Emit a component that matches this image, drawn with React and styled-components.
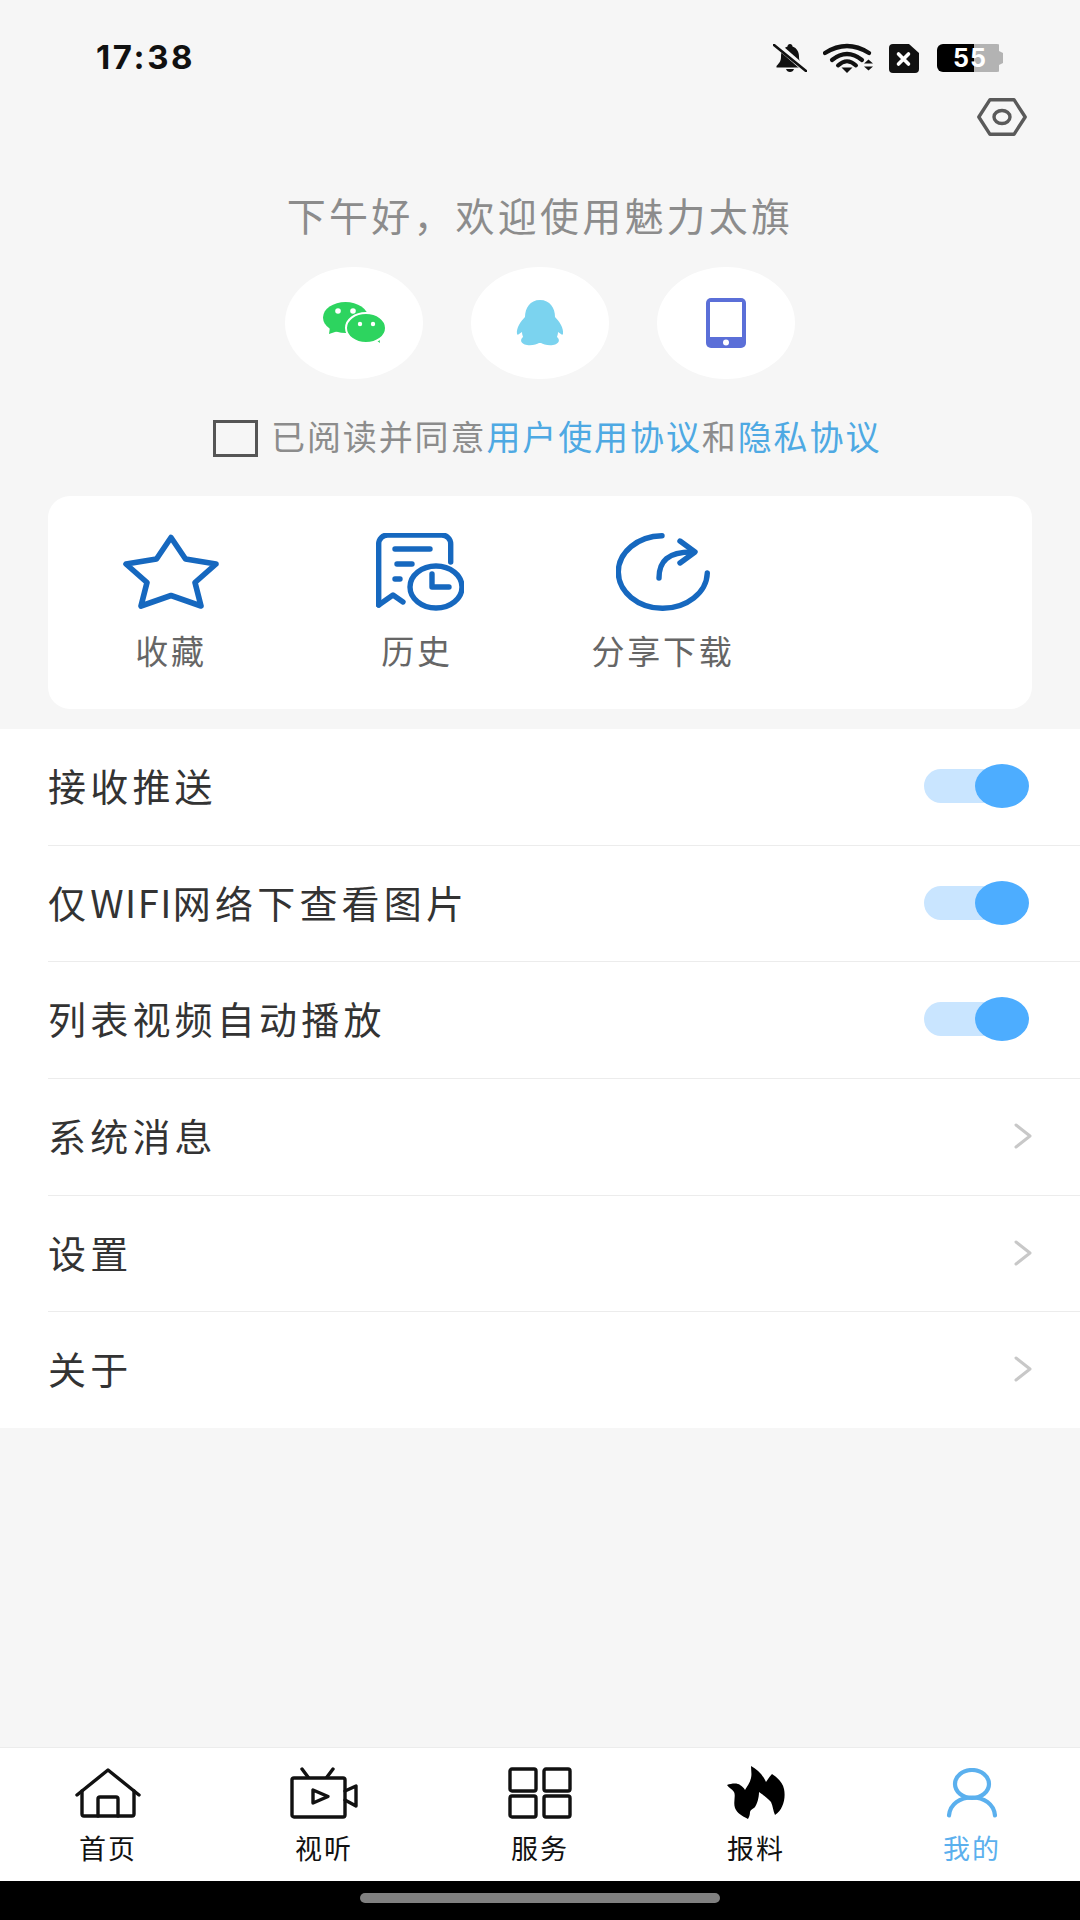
import React from 'react';
import styled, { createGlobalStyle } from 'styled-components';

const GlobalStyle = createGlobalStyle`
  html, body {
    margin: 0;
    padding: 0;
    background: #f6f6f6;
    font-family: "Noto Sans CJK SC", "Noto Sans", sans-serif;
  }
  * { box-sizing: border-box; }
`;

const Page = styled.div`
  width: 1080px;
  height: 1920px;
  display: flex;
  flex-direction: column;
  background: #f6f6f6;
  overflow: hidden;
`;

const StatusBar = styled.div`
  height: 90px;
  padding: 26px 77px 0 96px;
  display: flex;
  align-items: flex-start;
  justify-content: space-between;
`;

const StatusInner = styled.div`
  height: 64px;
  display: flex;
  align-items: center;
  gap: 16px;
`;

const Time = styled.span`
  margin-top: -3px;
  font-family: Inter, "Liberation Sans", sans-serif;
  font-weight: 700;
  font-size: 33px;
  letter-spacing: 2.6px;
  color: #111;
`;

const Battery = styled.div`
  width: 66px;
  height: 28px;
  margin-left: 2px;
  border-radius: 6px;
  display: flex;
  align-items: center;
  justify-content: center;
  background: linear-gradient(90deg, #000 0, #000 37px, #b3b3b3 37px, #b3b3b3 100%);
  clip-path: polygon(0 0, 62px 0, 62px 7px, 66px 9px, 66px 19px, 62px 21px, 62px 100%, 0 100%);
`;

const BatteryText = styled.span`
  font-family: Inter, "Liberation Sans", sans-serif;
  font-weight: 700;
  font-size: 25px;
  line-height: 28px;
  letter-spacing: 1px;
  color: #fff;
`;

const GearRow = styled.div`
  height: 60px;
  padding: 8px 53px 0 0;
  display: flex;
  justify-content: flex-end;
  align-items: flex-start;
`;

const Greeting = styled.div`
  margin-top: 42px;
  font-size: 39px;
  line-height: 44px;
  letter-spacing: 3.2px;
  text-align: center;
  color: #8c8c8c;
`;

const LoginRow = styled.div`
  margin-top: 31px;
  display: flex;
  justify-content: center;
  gap: 48px;
`;

const LoginButton = styled.div`
  width: 138px;
  height: 112px;
  border-radius: 50%;
  background: #fff;
  display: flex;
  align-items: center;
  justify-content: center;
`;

const AgreementRow = styled.div`
  margin-top: 39px;
  height: 40px;
  padding-left: 213px;
  display: flex;
  align-items: center;
  gap: 13px;
`;

const Checkbox = styled.div`
  width: 45px;
  height: 37px;
  border: 3px solid #555;
`;

const AgreementText = styled.span`
  padding-bottom: 4px;
  font-size: 34px;
  line-height: 40px;
  letter-spacing: 1.9px;
  color: #8c8c8c;
  white-space: nowrap;
`;

const AgreementLink = styled.span`
  color: #4ea9e3;
`;

const Card = styled.div`
  margin: 38px 48px 20px;
  height: 213px;
  padding-top: 37px;
  border-radius: 22px;
  background: #fff;
  display: grid;
  grid-template-columns: repeat(4, 1fr);
  align-items: start;
`;

const Shortcut = styled.div`
  display: flex;
  flex-direction: column;
  align-items: center;
`;

const ShortcutIcon = styled.div`
  height: 78px;
  margin-left: ${p => p.$shift || 0}px;
  display: flex;
  align-items: center;
  justify-content: center;
`;

const ShortcutLabel = styled.div`
  margin-top: 19px;
  font-size: 33px;
  line-height: 40px;
  letter-spacing: 2.7px;
  color: #666;
  white-space: nowrap;
`;

const List = styled.div`
  height: 699px;
  background: #fff;
  display: flex;
  flex-direction: column;
`;

const Row = styled.div`
  flex: 1;
  margin-left: 48px;
  padding-right: 51px;
  display: flex;
  align-items: center;
  justify-content: space-between;
  border-bottom: ${p => (p.$last ? 'none' : '1px solid #ececec')};
`;

const RowLabel = styled.span`
  padding-bottom: 4px;
  font-size: 38px;
  line-height: 44px;
  letter-spacing: 4.2px;
  color: #333;
  white-space: nowrap;
`;

const Latin = styled.span`
  letter-spacing: 1.5px;
`;

const Toggle = styled.div`
  width: 105px;
  height: 44px;
  margin-bottom: 2px;
  display: flex;
  align-items: center;
`;

const ToggleTrack = styled.div`
  width: 86px;
  height: 34px;
  flex-shrink: 0;
  border-radius: 17px;
  background: #c9e5ff;
`;

const ToggleThumb = styled.div`
  width: 54px;
  height: 44px;
  flex-shrink: 0;
  margin-left: -35px;
  border-radius: 50%;
  background: #4dadff;
`;

const Chevron = styled.svg`
  width: 18px;
  height: 26px;
  margin: 0 -3px 2px 0;
`;

const Spacer = styled.div`
  flex: 1;
`;

const TabBar = styled.div`
  height: 134px;
  padding-top: 18px;
  background: #fff;
  border-top: 1px solid #ececec;
  display: flex;
`;

const Tab = styled.div`
  flex: 1;
  display: flex;
  flex-direction: column;
  align-items: center;
`;

const TabIcon = styled.div`
  height: 54px;
  display: flex;
  align-items: center;
  justify-content: center;
`;

const TabLabel = styled.div`
  margin-top: 13px;
  font-size: 27px;
  line-height: 30px;
  letter-spacing: 2px;
  color: ${p => (p.$active ? '#5bb0ee' : '#111')};
`;

const NavBar = styled.div`
  height: 39px;
  background: #000;
  display: flex;
  justify-content: center;
  padding-top: 12px;
`;

const HomePill = styled.div`
  width: 360px;
  height: 10px;
  border-radius: 5px;
  background: #808080;
`;

const BellIcon = () => (
  <svg width="34" height="28" viewBox="0 0 34 28">
    <path fill="#111" d="M17 0c1.500 0 2.500 1 2.500 2.500C24 4 26 8 26 12.500c0 4 1 6 4.500 9.500v1.500h-27V22C7 18.500 8 16.500 8 12.500 8 8 10 4 14.500 2.500 14.500 1 15.500 0 17 0z" />
    <path fill="#111" d="M13 25h8c-.6 2-2 3-4 3s-3.400-1-4-3z" />
    <path d="M3 0l31 27" stroke="#f6f6f6" strokeWidth="6" />
    <path d="M1 1l32 26" stroke="#111" strokeWidth="2.600" strokeLinecap="round" />
  </svg>
);

const WifiIcon = () => (
  <svg width="50" height="30" viewBox="0 0 50 30" fill="none">
    <path d="M2 10Q24-4 46 10" stroke="#111" strokeWidth="4.200" strokeLinecap="round" />
    <path d="M9 17Q24 5 39 17" stroke="#111" strokeWidth="4.200" strokeLinecap="round" />
    <path d="M15 22.500Q24 14 33 22.500" stroke="#111" strokeWidth="4" strokeLinecap="round" />
    <path d="M18.500 24.500h11L24 30z" fill="#111" />
    <path d="M41 20.500l4.500-4 4.500 4zM41 23.500h9l-4.500 4z" fill="#111" />
  </svg>
);

const SimIcon = () => (
  <svg width="30" height="29" viewBox="0 0 30 29">
    <path fill="#111" d="M4 0h16l10 9v16a4 4 0 0 1-4 4H4a4 4 0 0 1-4-4V4a4 4 0 0 1 4-4z" />
    <path d="M9.500 10l10 10M19.500 10l-10 10" stroke="#fff" strokeWidth="3.600" strokeLinecap="round" />
  </svg>
);

const GearIcon = () => (
  <svg width="50" height="38" viewBox="0 0 50 38" fill="none" stroke="#5a5a5a" strokeWidth="3.400">
    <path d="M1.800 19L13 1.700h24L48.200 19 37 36.300H13z" strokeLinejoin="round" />
    <ellipse cx="25" cy="19" rx="8" ry="6.500" />
  </svg>
);

const WechatIcon = () => (
  <svg width="62" height="42" viewBox="0 0 62 42">
    <path fill="#2dd45f" d="M7 25l-1 7 9-3z" />
    <ellipse cx="22.500" cy="15.500" rx="22.500" ry="15.500" fill="#2dd45f" />
    <circle cx="15" cy="9" r="2.800" fill="#fff" />
    <circle cx="30" cy="9" r="2.800" fill="#fff" />
    <path fill="#2dd45f" d="M50 36l7 5-1-9z" />
    <ellipse cx="43" cy="26" rx="20" ry="15" fill="#2dd45f" stroke="#fff" strokeWidth="2" />
    <circle cx="37" cy="22" r="2.200" fill="#fff" />
    <circle cx="50" cy="22" r="2.200" fill="#fff" />
  </svg>
);

const QQIcon = () => (
  <svg width="48" height="46" viewBox="0 0 48 46">
    <path fill="#7bd3ef" d="M24 0C34 0 39 8 39 17C43 21 48 28 47 34C46 36 44 33 42 32C42 35 41 36 41 37C44 39 44 44 37 45C32 46 27 44 25 43H23C21 44 16 46 11 45C4 44 4 39 7 37C7 36 6 35 6 32C4 33 2 36 1 34C0 28 5 21 9 17C9 8 14 0 24 0Z" />
  </svg>
);

const PhoneIcon = () => (
  <svg width="40" height="50" viewBox="0 0 40 50">
    <rect width="40" height="50" rx="5" fill="#5b6fd8" />
    <rect x="4" y="4" width="32" height="35" fill="#fff" />
    <circle cx="20" cy="44.500" r="3" fill="#fff" />
  </svg>
);

const StarIcon = () => (
  <svg width="96" height="76" viewBox="0 0 96 76" fill="none" stroke="#1668bf" strokeWidth="5.600" strokeLinejoin="round">
    <path d="M48 3.500L62.500 25 93 30 72 48.500 78 72 48 61.500 18 72 24 48.500 3 30 33.500 25z" />
  </svg>
);

const HistoryIcon = () => (
  <svg width="88" height="78" viewBox="0 0 88 78" fill="none" stroke="#1668bf" strokeWidth="5.400" strokeLinecap="round" strokeLinejoin="round">
    <path d="M2.700 72V11a9 9 0 0 1 9-9h54a9 9 0 0 1 9 9v18" />
    <path d="M2.700 72L17 62l10 7" />
    <path d="M19 16h35M21 31h15M19 46h5" />
    <ellipse cx="60" cy="54" rx="26" ry="21" />
    <path d="M56 41v13h17" />
  </svg>
);

const ShareIcon = () => (
  <svg width="94" height="78" viewBox="0 0 94 78" fill="none" stroke="#1668bf" strokeWidth="5.400" strokeLinecap="round" strokeLinejoin="round">
    <path d="M46 2.700A44.500 36.300 0 1 0 91.300 40" />
    <path d="M43 45C43 28 52 19 76 19" />
    <path d="M64 8l15 11-15 11" />
  </svg>
);

const HomeIcon = () => (
  <svg width="66" height="50" viewBox="0 0 66 50" fill="none" stroke="#111" strokeWidth="3.400" strokeLinecap="round" strokeLinejoin="round">
    <path d="M2 27L33 2l31 25" />
    <path d="M7 23v23a2 2 0 0 0 2 2h48a2 2 0 0 0 2-2V23" />
    <path d="M23 48V31a2 2 0 0 1 2-2h16a2 2 0 0 1 2 2v17" />
  </svg>
);

const VideoIcon = () => (
  <svg width="68" height="52" viewBox="0 0 68 52" fill="none" stroke="#111" strokeWidth="3.400" strokeLinecap="round" strokeLinejoin="round">
    <rect x="2" y="11" width="53" height="39" rx="2" />
    <path d="M12 2l6 8M43 2l-6 8" />
    <path d="M23 23v13l15-6.500z" />
    <path d="M55 24l11-5v20l-11-6" />
  </svg>
);

const GridIcon = () => (
  <svg width="64" height="52" viewBox="0 0 64 52" fill="none" stroke="#111" strokeWidth="3.400">
    <rect x="2" y="2" width="26" height="22" rx="2" />
    <rect x="36" y="2" width="26" height="22" rx="2" />
    <rect x="2" y="29" width="26" height="21" rx="2" />
    <rect x="36" y="29" width="26" height="21" rx="2" />
  </svg>
);

const FlameIcon = () => (
  <svg width="58" height="54" viewBox="0 0 58 54">
    <path fill="#000" d="M24 0C30 3 36 9 39 16C41 13 43 10 45 8C51 12 56 17 57 23C59 32 56 44 48 49C46 45 46 40 44 36C41 32 36 29 32 26C32 32 30 38 28 41C26 43 24 43 23 46C23 49 22 51 21 53C15 50 10 47 8 42C6 36 9 30 7 26C5 23 2 22 0 19C5 17 11 17 13 19C15 20 17 22 18 24C20 20 23 17 24 12C25 8 24 4 24 0Z" />
  </svg>
);

const UserIcon = () => (
  <svg width="52" height="50" viewBox="0 0 52 50" fill="none" stroke="#5bb0ee" strokeWidth="4.200" strokeLinecap="round">
    <ellipse cx="26" cy="16" rx="17" ry="14" />
    <path d="M3 47.500C4 36 14 29.500 26 29.500S48 36 49 47.500" />
  </svg>
);

const shortcuts = [
  { label: '收藏', icon: <StarIcon /> },
  { label: '历史', icon: <HistoryIcon />, shift: 6 },
  { label: '分享下载', icon: <ShareIcon /> },
];

const rows = [
  { label: '接收推送', toggle: true },
  { label: <>仅<Latin>WIFI</Latin>网络下查看图片</>, toggle: true },
  { label: '列表视频自动播放', toggle: true },
  { label: '系统消息' },
  { label: '设置' },
  { label: '关于' },
];

const tabs = [
  { label: '首页', icon: <HomeIcon /> },
  { label: '视听', icon: <VideoIcon /> },
  { label: '服务', icon: <GridIcon /> },
  { label: '报料', icon: <FlameIcon /> },
  { label: '我的', icon: <UserIcon />, active: true },
];

export default function App() {
  return (
    <Page>
      <GlobalStyle />
      <StatusBar>
        <StatusInner>
          <Time>17:38</Time>
        </StatusInner>
        <StatusInner>
          <BellIcon />
          <WifiIcon />
          <SimIcon />
          <Battery>
            <BatteryText>55</BatteryText>
          </Battery>
        </StatusInner>
      </StatusBar>
      <GearRow>
        <GearIcon />
      </GearRow>
      <Greeting>下午好，欢迎使用魅力太旗</Greeting>
      <LoginRow>
        <LoginButton><WechatIcon /></LoginButton>
        <LoginButton><QQIcon /></LoginButton>
        <LoginButton><PhoneIcon /></LoginButton>
      </LoginRow>
      <AgreementRow>
        <Checkbox />
        <AgreementText>
          已阅读并同意<AgreementLink>用户使用协议</AgreementLink>和<AgreementLink>隐私协议</AgreementLink>
        </AgreementText>
      </AgreementRow>
      <Card>
        {shortcuts.map(s => (
          <Shortcut key={s.label}>
            <ShortcutIcon $shift={s.shift}>{s.icon}</ShortcutIcon>
            <ShortcutLabel>{s.label}</ShortcutLabel>
          </Shortcut>
        ))}
      </Card>
      <List>
        {rows.map((r, i) => (
          <Row key={i} $last={i === rows.length - 1}>
            <RowLabel>{r.label}</RowLabel>
            {r.toggle ? (
              <Toggle>
                <ToggleTrack />
                <ToggleThumb />
              </Toggle>
            ) : (
              <Chevron viewBox="0 0 18 26" fill="none" stroke="#c8c8c8" strokeWidth="3" strokeLinecap="round" strokeLinejoin="round">
                <path d="M2 2l14 11L2 24" />
              </Chevron>
            )}
          </Row>
        ))}
      </List>
      <Spacer />
      <TabBar>
        {tabs.map(t => (
          <Tab key={t.label}>
            <TabIcon>{t.icon}</TabIcon>
            <TabLabel $active={t.active}>{t.label}</TabLabel>
          </Tab>
        ))}
      </TabBar>
      <NavBar>
        <HomePill />
      </NavBar>
    </Page>
  );
}
